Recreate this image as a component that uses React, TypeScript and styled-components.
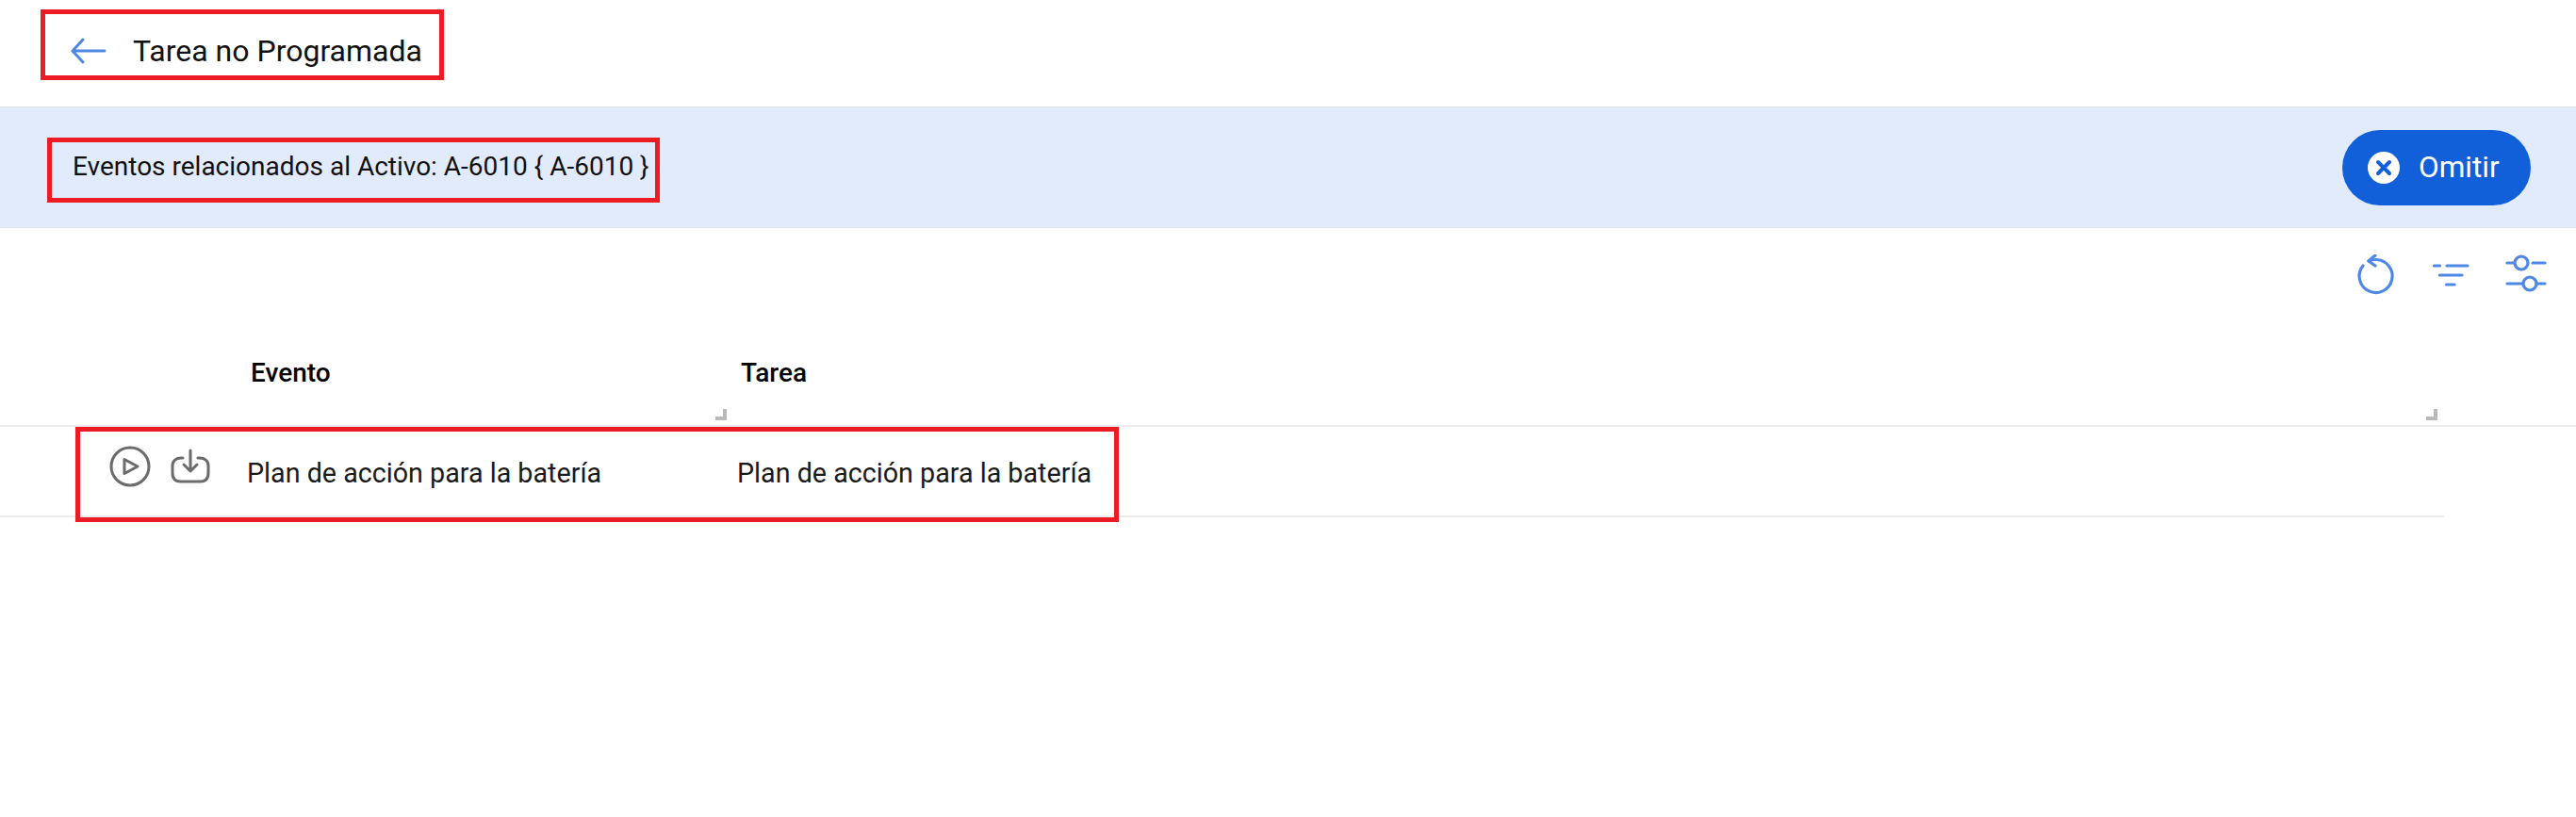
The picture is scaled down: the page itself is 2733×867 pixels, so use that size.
import React from 'react';
import styled, { createGlobalStyle } from 'styled-components';

const GlobalStyle = createGlobalStyle`
  html, body {
    margin: 0;
    padding: 0;
    background: #fff;
    font-family: Roboto, "Liberation Sans", sans-serif;
    color: #111;
  }
`;

const Page = styled.div`
  width: 2733px;
  height: 867px;
  overflow: hidden;
`;

const TopBar = styled.header`
  height: 113px;
  padding: 10px 0 0 43px;
  box-sizing: border-box;
`;

const TitleBox = styled.div`
  display: flex;
  align-items: center;
  gap: 28px;
  width: 428px;
  height: 75px;
  box-sizing: border-box;
  border: 5px solid #ed1c24;
  padding: 12px 0 0 27px;
`;

const Title = styled.h1`
  margin: 0;
  font-size: 32px;
  font-weight: 400;
  white-space: nowrap;
  color: #111;
`;

const Band = styled.section`
  height: 129px;
  box-sizing: border-box;
  display: flex;
  align-items: center;
  justify-content: space-between;
  padding: 0 48px 0 50px;
  background: #e2ebfc;
  border-top: 1px solid #dfe3ea;
  border-bottom: 1px solid #dfe3ea;
`;

const EventBox = styled.div`
  width: 650px;
  height: 69px;
  margin-top: 6px;
  box-sizing: border-box;
  display: flex;
  align-items: center;
  padding: 0 0 8px 22px;
  border: 5px solid #ed1c24;
  font-size: 28px;
  white-space: nowrap;
`;

const SkipButton = styled.button`
  width: 200px;
  height: 80px;
  display: flex;
  align-items: center;
  gap: 20px;
  padding: 0 0 0 27px;
  border: 0;
  border-radius: 40px;
  background: #1160d9;
  color: #fff;
  font-family: inherit;
  font-size: 31.5px;
`;

const Toolbar = styled.div`
  display: flex;
  justify-content: flex-end;
  gap: 36px;
  height: 98px;
  padding: 28px 30px 0 0;
  box-sizing: border-box;
`;

const HeadRow = styled.div`
  position: relative;
  height: 113px;
  box-sizing: border-box;
  border-bottom: 2px solid #ececec;
  display: grid;
  grid-template-columns: 266px 520px 1fr;
`;

const HeadCell = styled.div`
  grid-column: ${(p) => p.$col};
  padding-top: 39px;
  font-size: 28px;
  font-weight: 500;
  color: #000;
`;

const ResizeHandle = styled.span`
  position: absolute;
  left: ${(p) => p.$left}px;
  top: 94px;
  width: 12px;
  height: 12px;
  box-sizing: border-box;
  border-right: 4px solid #b9b9b9;
  border-bottom: 4px solid #b9b9b9;
`;

const BodyRow = styled.div`
  position: relative;
  width: 2593px;
  height: 96px;
  box-sizing: border-box;
  border-bottom: 2px solid #ececec;
  display: grid;
  grid-template-columns: 262px 520px 1fr;
  align-items: center;
`;

const Actions = styled.div`
  display: flex;
  align-items: center;
  align-self: start;
  gap: 21px;
  height: 83px;
  padding-left: 116px;
  box-sizing: border-box;
`;

const BodyCell = styled.div`
  font-size: 28.7px;
  white-space: nowrap;
  padding-top: 4px;
  color: #1a1a1a;
`;

const RowHighlight = styled.div`
  position: absolute;
  left: 80px;
  top: 0;
  width: 1107px;
  height: 101px;
  box-sizing: border-box;
  border: 5px solid #ed1c24;
  pointer-events: none;
`;

const BackIcon = () => (
  <svg width="38" height="28" viewBox="0 0 38 28" fill="none" stroke="#4f88e3" strokeWidth="3" strokeLinecap="round" strokeLinejoin="round">
    <path d="M36 14H2M13 2 2 14 13 26" />
  </svg>
);

const CloseIcon = () => (
  <svg width="34" height="34" viewBox="0 0 34 34">
    <circle cx="17" cy="17" r="17" fill="#fff" />
    <path d="M11 11 23 23M23 11 11 23" stroke="#1160d9" strokeWidth="4" strokeLinecap="round" />
  </svg>
);

const RefreshIcon = () => (
  <svg width="44" height="46" viewBox="0 0 44 46" fill="none" stroke="#4f88e3" strokeWidth="3.2" strokeLinecap="round" strokeLinejoin="round">
    <path d="M14 7C16.500 6 19 5.500 22 5.500A17.500 17.500 0 1 1 8 12" />
    <path d="M21 1 14 7 21 12" />
  </svg>
);

const FilterIcon = () => (
  <svg width="42" height="44" viewBox="0 0 42 44" fill="none" stroke="#4f88e3" strokeWidth="3.2" strokeLinecap="round">
    <path d="M3.500 12H9.500M17 12H39M9.500 22H33M16.500 32H25" />
  </svg>
);

const SlidersIcon = () => (
  <svg width="46" height="44" viewBox="0 0 46 44" fill="none" stroke="#4f88e3" strokeWidth="3.2" strokeLinecap="round">
    <path d="M3 9H10M30 9H43M3 31H19M35 31H43" />
    <circle cx="18" cy="9" r="7" />
    <circle cx="27" cy="31" r="7" />
  </svg>
);

const PlayIcon = () => (
  <svg width="44" height="44" viewBox="0 0 44 44" fill="none" stroke="#6b6b6b" strokeWidth="3" strokeLinejoin="round">
    <circle cx="22" cy="22" r="20" />
    <path d="M16 14.500V29.500L30 22Z" />
  </svg>
);

const SaveIcon = () => (
  <svg width="42" height="38" viewBox="0 0 42 38" fill="none" stroke="#6b6b6b" strokeWidth="3" strokeLinecap="round" strokeLinejoin="round">
    <path d="M13 10H11C6 10 2 13 2 18V26C2 32 5 35 11 35H31C37 35 40 32 40 26V18C40 13 36 10 31 10H29" />
    <path d="M21 2V23M14 17 21 24 28 17" />
  </svg>
);

export default function App() {
  return (
    <Page>
      <GlobalStyle />
      <TopBar>
        <TitleBox>
          <BackIcon />
          <Title>Tarea no Programada</Title>
        </TitleBox>
      </TopBar>
      <Band>
        <EventBox>Eventos relacionados al Activo: A-6010 {'{'} A-6010 {'}'}</EventBox>
        <SkipButton>
          <CloseIcon />
          Omitir
        </SkipButton>
      </Band>
      <Toolbar>
        <RefreshIcon />
        <FilterIcon />
        <SlidersIcon />
      </Toolbar>
      <HeadRow>
        <HeadCell $col={2}>Evento</HeadCell>
        <HeadCell $col={3}>Tarea</HeadCell>
        <ResizeHandle $left={759} />
        <ResizeHandle $left={2574} />
      </HeadRow>
      <BodyRow>
        <Actions>
          <PlayIcon />
          <SaveIcon />
        </Actions>
        <BodyCell>Plan de acción para la batería</BodyCell>
        <BodyCell>Plan de acción para la batería</BodyCell>
        <RowHighlight />
      </BodyRow>
    </Page>
  );
}
